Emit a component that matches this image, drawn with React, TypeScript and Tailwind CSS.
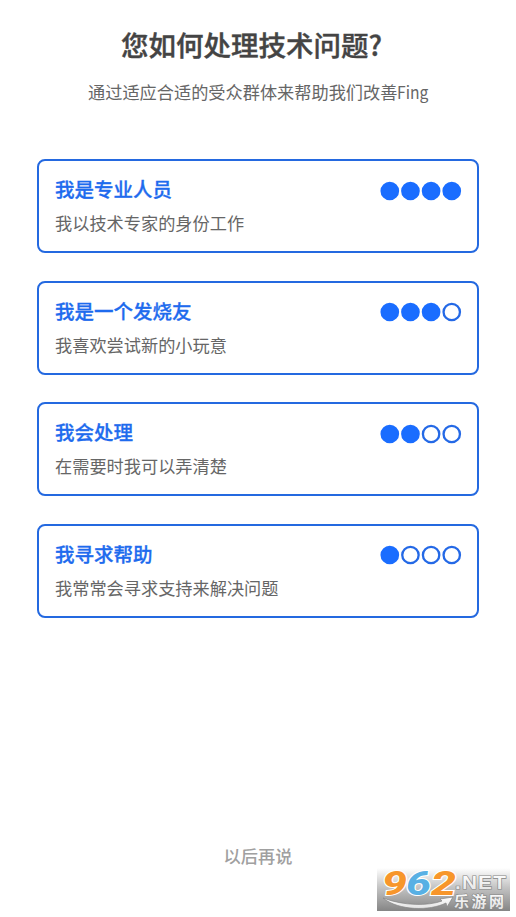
type Level = { title: string; detail: string; score: number };

const levels: Level[] = [
  { title: "我是专业人员", detail: "我以技术专家的身份工作", score: 4 },
  { title: "我是一个发烧友", detail: "我喜欢尝试新的小玩意", score: 3 },
  { title: "我会处理", detail: "在需要时我可以弄清楚", score: 2 },
  { title: "我寻求帮助", detail: "我常常会寻求支持来解决问题", score: 1 },
];

function Score({ value }: { value: number }) {
  return (
    <svg className="mt-[19.5px] h-5 w-[82px] shrink-0" viewBox="0 0 82 20" aria-hidden="true">
      {[0, 1, 2, 3].map((i) => (
        <circle
          key={i}
          cx={9.8 + i * 20.65}
          cy={10}
          r={8.2}
          fill={i < value ? "#1a6dff" : "white"}
          stroke={i < value ? "#1a6dff" : "#2469e6"}
          strokeWidth={2.3}
        />
      ))}
    </svg>
  );
}

function LevelCard({ level }: { level: Level }) {
  return (
    <button className="flex h-[94px] w-full items-start justify-between rounded-[8px] border-2 border-[#2469e0] bg-white pr-[15px] pl-4 text-left">
      <span className="flex flex-col pt-[13px]">
        <span className="text-[19.5px] leading-[30px] font-medium text-[#1e6bee] [-webkit-text-stroke:0.3px_#1e6bee]">{level.title}</span>
        <span className="mt-[6px] text-[17.2px] leading-[26px] text-[#666666]">{level.detail}</span>
      </span>
      <Score value={level.score} />
    </button>
  );
}

function Watermark() {
  return (
    <svg className="absolute top-[868px] left-[377px] h-[43px] w-[133px] overflow-visible" viewBox="0 0 133 43">
      <defs>
        <linearGradient id="plate" x1="0" y1="0" x2="0" y2="1">
          <stop offset="0" stopColor="#fff" />
          <stop offset="0.45" stopColor="#c4c4c4" />
          <stop offset="1" stopColor="#858585" />
        </linearGradient>
        <linearGradient id="silver" x1="0" y1="0" x2="0" y2="1">
          <stop offset="0" stopColor="#fff" />
          <stop offset="1" stopColor="#e2e2e2" />
        </linearGradient>
      </defs>
      <rect width="133" height="43" fill="url(#plate)" />
      <path d="M6 30 C22 43 53 43 69 35 L70 39 L76 29 L63 31 L65 33 C51 38 27 38 6 30Z" fill="url(#silver)" stroke="#858585" strokeWidth=".7" />
      <g fontFamily="Roboto, sans-serif" fontWeight="800" fontStyle="italic" fontSize="34" stroke="#fff" strokeWidth="2" paintOrder="stroke">
        <text x="5" y="27" textLength="25" lengthAdjust="spacingAndGlyphs" fill="#f7962b">9</text>
        <text x="29" y="27" textLength="25" lengthAdjust="spacingAndGlyphs" fill="#58b0e4">6</text>
        <text x="54" y="27" textLength="25" lengthAdjust="spacingAndGlyphs" fill="#f7962b">2</text>
      </g>
      <g fill="url(#silver)" stroke="#858585" strokeWidth="1.2" paintOrder="stroke" fontWeight="700">
        <text x="78" y="21" textLength="52" lengthAdjust="spacingAndGlyphs" fontSize="18" letterSpacing="1" fontFamily="Liberation Sans, sans-serif">.NET</text>
        <text x="77" y="38.5" textLength="50" fontSize="15" fontFamily="Noto Sans CJK SC, sans-serif">乐游网</text>
      </g>
    </svg>
  );
}

export default function App() {
  return (
    <main className="relative flex h-[917px] w-[516px] flex-col bg-white px-[37px] font-['Noto_Sans_CJK_SC',sans-serif]">
      <h1 className="mt-[23.5px] -translate-x-[6.5px] text-center text-[27.5px] leading-10 font-medium text-[#444444] [-webkit-text-stroke:0.4px_#444444]">您如何处理技术问题?</h1>
      <p className="mt-[15.5px] text-center text-[17.2px] leading-[26px] text-[#666666]">
        通过适应合适的受众群体来帮助我们改善<span className="inline-block w-[30.5px] origin-left scale-x-[0.91] text-left">Fing</span>
      </p>
      <section className="mt-[54px] flex flex-col gap-[27.6px]">
        {levels.map((level) => (
          <LevelCard key={level.title} level={level} />
        ))}
      </section>
      <button className="mt-auto mb-[48px] self-center text-[17.2px] leading-[26px] font-medium text-[#a0a0a0]">以后再说</button>
      <Watermark />
    </main>
  );
}
